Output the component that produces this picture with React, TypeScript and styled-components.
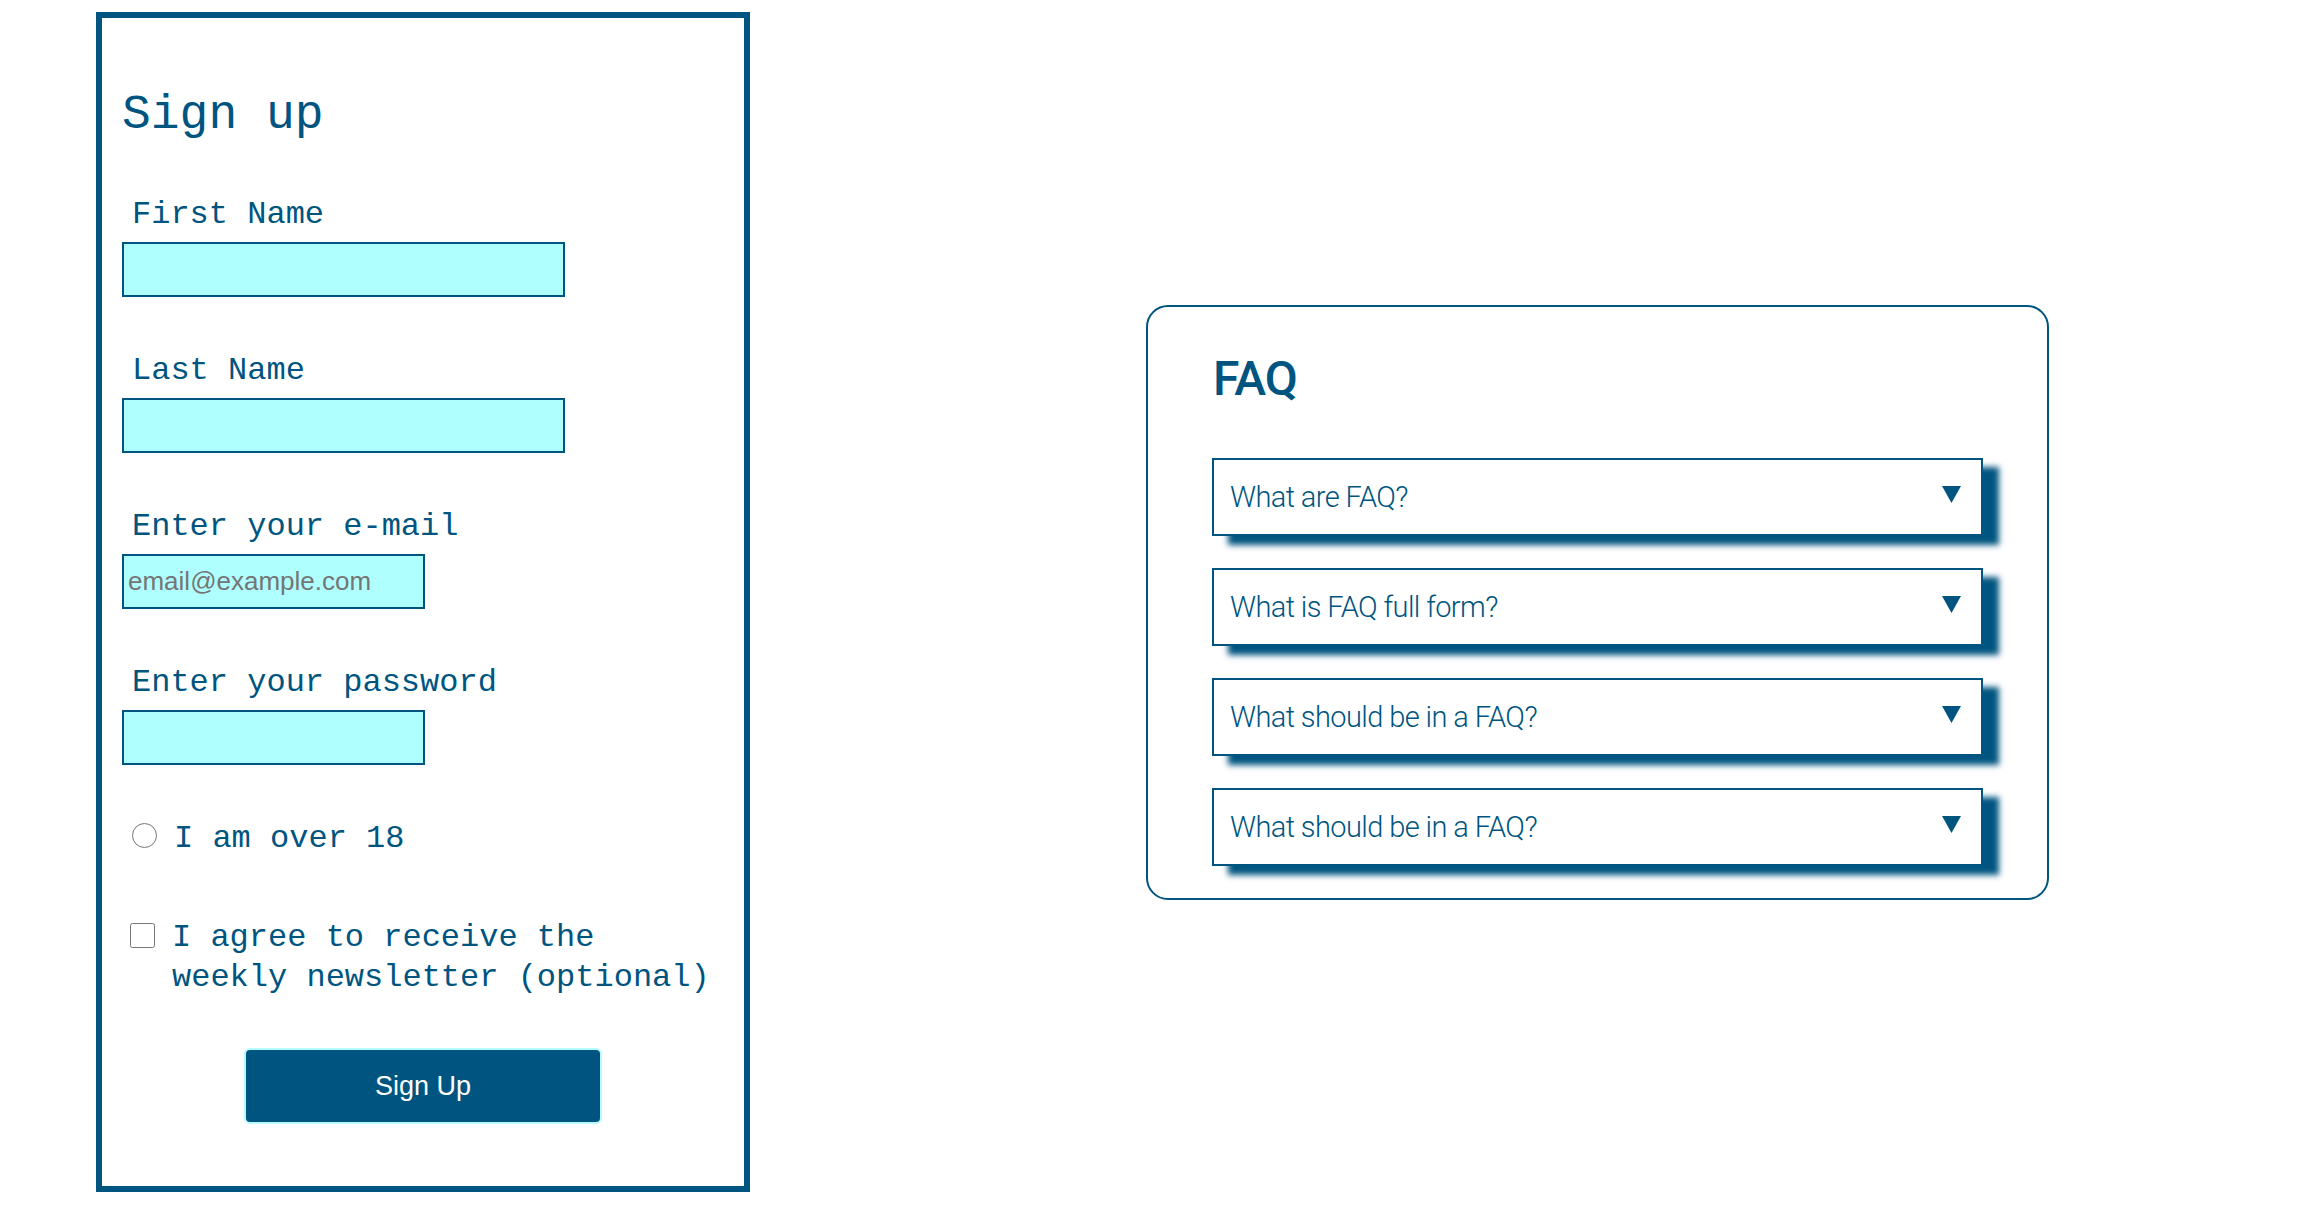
import React from 'react';
import styled, { createGlobalStyle } from 'styled-components';

const ink = '#005580';

const GlobalStyle = createGlobalStyle`
  body {
    margin: 0;
    background: #ffffff;
  }
`;

const Page = styled.main`
  display: flex;
  flex-direction: row;
  align-items: center;
  padding: 12px 0 0 96px;
  gap: 396px;
`;

const SignupForm = styled.form`
  box-sizing: border-box;
  width: 654px;
  border: 6px solid ${ink};
  padding: 0 20px 62px 20px;
  color: ${ink};
  font-family: "Liberation Mono", "DejaVu Sans Mono", monospace;
`;

const FormTitle = styled.h1`
  margin: 69px 0 52px 0;
  font-size: 48px;
  line-height: 56px;
  font-weight: 400;
`;

const Field = styled.div`
  margin-bottom: 54px;
`;

const Label = styled.label`
  display: block;
  padding-left: 10px;
  margin-bottom: 7px;
  font-size: 32px;
  line-height: 40px;
`;

const TextInput = styled.input<{ $wide?: boolean }>`
  display: block;
  box-sizing: border-box;
  width: ${p => (p.$wide ? '443px' : '303px')};
  height: 55px;
  margin: 0;
  padding: 0 4px;
  border: 2px solid ${ink};
  border-radius: 0;
  background: #afffff;
  font-family: "Liberation Sans", Arial, sans-serif;
  font-size: 26px;
  color: ${ink};
  outline: none;

  &::placeholder {
    color: #757575;
  }
`;

const ChoiceRow = styled.label<{ $indent: number; $gapAfter: number }>`
  display: flex;
  align-items: flex-start;
  gap: 17px;
  padding-left: ${p => p.$indent}px;
  margin-bottom: ${p => p.$gapAfter}px;
  font-size: 32px;
  line-height: 40px;
`;

const Radio = styled.input`
  flex: none;
  width: 25px;
  height: 25px;
  margin: 4px 0 0 0;
`;

const Checkbox = styled.input`
  flex: none;
  width: 25px;
  height: 25px;
  margin: 5px 0 0 0;
`;

const SubmitButton = styled.button`
  display: block;
  box-sizing: border-box;
  width: 358px;
  height: 76px;
  margin: 0 auto;
  border: 2px solid #b5fbff;
  border-radius: 6px;
  background: ${ink};
  color: #ffffff;
  font-family: "Liberation Sans", Arial, sans-serif;
  font-size: 27px;
`;

const FaqCard = styled.section`
  box-sizing: border-box;
  width: 903px;
  border: 2px solid ${ink};
  border-radius: 22px;
  padding: 44px 64px 32px 64px;
  color: ${ink};
  font-family: Roboto, "Liberation Sans", sans-serif;
`;

const FaqTitle = styled.h2`
  margin: 0 0 51px 0;
  padding-left: 1px;
  font-size: 48px;
  line-height: 56px;
  font-weight: 500;
  letter-spacing: -1px;
`;

const FaqList = styled.div`
  display: flex;
  flex-direction: column;
  gap: 32px;
`;

const FaqRow = styled.div`
  box-sizing: border-box;
  height: 78px;
  display: flex;
  align-items: center;
  justify-content: space-between;
  padding: 0 20px 0 16px;
  border: 2px solid ${ink};
  background: #ffffff;
  box-shadow: 16px 9px 6px ${ink};
  font-size: 29px;
  font-weight: 300;
  letter-spacing: -0.6px;
`;

const Arrow = () => (
  <svg width="19" height="17" viewBox="0 0 19 17" style={{ marginBottom: 5 }}>
    <polygon points="0,0 19,0 9.5,17" fill={ink} />
  </svg>
);

const questions = [
  'What are FAQ?',
  'What is FAQ full form?',
  'What should be in a FAQ?',
  'What should be in a FAQ?',
];

const App = () => {
  return <>
    <GlobalStyle />
    <Page>
      <SignupForm onSubmit={e => e.preventDefault()}>
        <FormTitle>Sign up</FormTitle>
        <Field>
          <Label htmlFor="first">First Name</Label>
          <TextInput id="first" type="text" $wide />
        </Field>
        <Field>
          <Label htmlFor="last">Last Name</Label>
          <TextInput id="last" type="text" $wide />
        </Field>
        <Field>
          <Label htmlFor="email">Enter your e-mail</Label>
          <TextInput id="email" type="email" placeholder="email@example.com" />
        </Field>
        <Field>
          <Label htmlFor="password">Enter your password</Label>
          <TextInput id="password" type="password" />
        </Field>
        <ChoiceRow $indent={10} $gapAfter={59}>
          <Radio type="radio" name="age" />
          <span>I am over 18</span>
        </ChoiceRow>
        <ChoiceRow $indent={8} $gapAfter={50}>
          <Checkbox type="checkbox" />
          <span>I agree to receive the weekly newsletter (optional)</span>
        </ChoiceRow>
        <SubmitButton type="submit">Sign Up</SubmitButton>
      </SignupForm>

      <FaqCard>
        <FaqTitle>FAQ</FaqTitle>
        <FaqList>
          {questions.map((q, i) => (
            <FaqRow key={i}>
              <span>{q}</span>
              <Arrow />
            </FaqRow>
          ))}
        </FaqList>
      </FaqCard>
    </Page>
  </>;
};

export default App;
